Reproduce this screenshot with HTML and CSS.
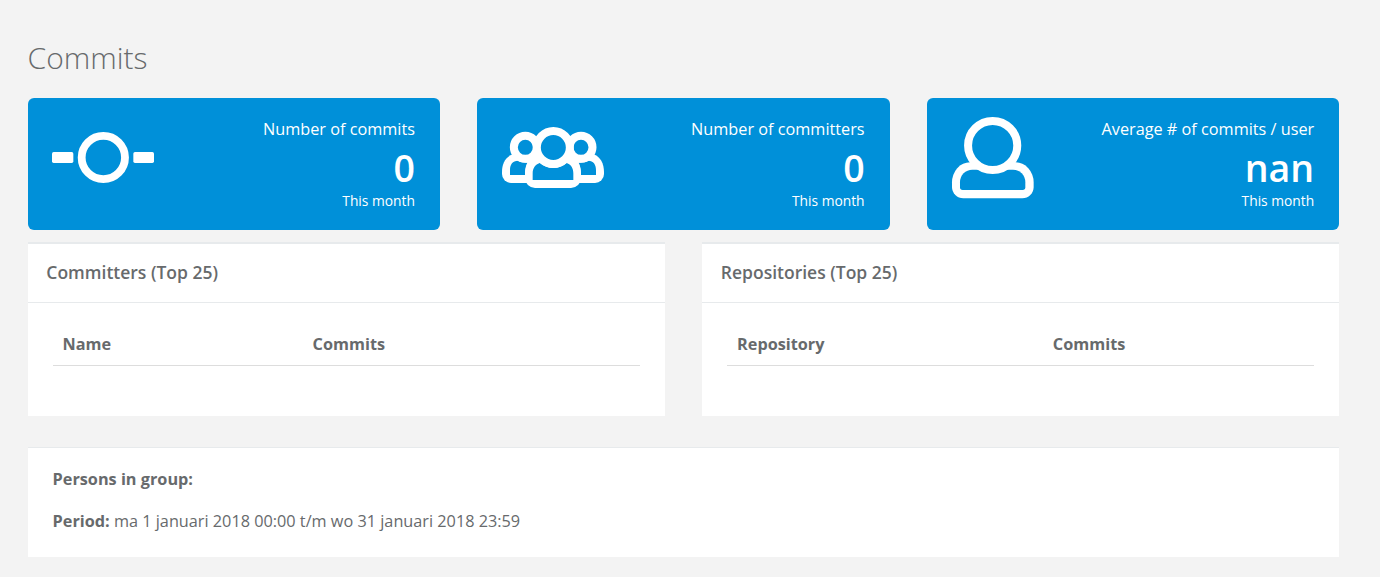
FILE: index.html
```html
<!DOCTYPE html>
<html lang="en">
<head>
<meta charset="utf-8">
<title>Commits</title>
<link rel="stylesheet" href="styles.css">
</head>
<body>
<main class="page">
  <h2 class="page-title">Commits</h2>

  <section class="widgets">
    <div class="widget">
      <svg class="icon icon-commit" viewBox="96 306 306 153">
        <rect class="solid" x="96" y="366" width="64" height="33" rx="5"/>
        <rect class="solid" x="340" y="366" width="62" height="33" rx="5"/>
        <circle class="ring" cx="250" cy="382.500" r="65"/>
      </svg>
      <div class="widget-text">
        <span class="label">Number of commits</span>
        <strong class="value">0</strong>
        <small class="note">This month</small>
      </div>
    </div>

    <div class="widget">
      <svg class="icon icon-group" viewBox="96 111 306 183">
        <path class="solid" d="M130 192C107 200 96 221 96 246V252A27 27 0 0 0 123 279H375A27 27 0 0 0 402 252V246C402 221 391 200 370 192Z"/>
        <path class="hole" d="M120 255V240C120 223 128 212 144 212Q156 219 172 218Q165 230 165 255Z"/>
        <path class="hole" d="M378 255V240C378 223 370 212 355 212Q343 219 326 218Q333 230 333 255Z"/>
        <circle class="disc" cx="166" cy="172" r="34.500"/>
        <circle class="disc" cx="333" cy="172" r="34.500"/>
        <path class="solid" d="M190 205C172 215 165 232 165 252V264A30 30 0 0 0 195 294H303A30 30 0 0 0 333 264V252C333 232 326 215 308 205Z"/>
        <path class="hole" d="M188 270V250C188 234 196 224 209 219Q250 249 290 219C303 224 310 234 310 250V270Z"/>
        <circle class="disc" cx="250" cy="172.500" r="49.500"/>
      </svg>
      <div class="widget-text">
        <span class="label">Number of committers</span>
        <strong class="value">0</strong>
        <small class="note">This month</small>
      </div>
    </div>

    <div class="widget">
      <svg class="icon icon-user" viewBox="96 81 245 244">
        <path class="solid" d="M150 217A54 60 0 0 0 96 277V291A34 34 0 0 0 130 325H307A34 34 0 0 0 341 291V277A55 60 0 0 0 286 217Z"/>
        <path class="hole" d="M120 277A37 38 0 0 1 157 239H279A37 38 0 0 1 316 277V292Q316 300 308 300H128Q120 300 120 292Z"/>
        <circle class="disc" cx="218" cy="166.500" r="73.800"/>
      </svg>
      <div class="widget-text">
        <span class="label">Average # of commits / user</span>
        <strong class="value">nan</strong>
        <small class="note">This month</small>
      </div>
    </div>
  </section>

  <section class="panels">
    <div class="panel">
      <h5 class="panel-title">Committers (Top 25)</h5>
      <div class="panel-body">
        <table class="table">
          <thead><tr><th class="col-name">Name</th><th>Commits</th></tr></thead>
        </table>
      </div>
    </div>
    <div class="panel">
      <h5 class="panel-title">Repositories (Top 25)</h5>
      <div class="panel-body">
        <table class="table">
          <thead><tr><th class="col-repository">Repository</th><th>Commits</th></tr></thead>
        </table>
      </div>
    </div>
  </section>

  <section class="summary">
    <p><b>Persons in group:</b></p>
    <p><b>Period:</b> ma 1 januari 2018 00:00 t/m wo 31 januari 2018 23:59</p>
  </section>
</main>
</body>
</html>
```
FILE: styles.css
```css
* { box-sizing: border-box; }

body {
  margin: 0;
  background: #f3f3f3;
  color: #676a6c;
  font: 16.25px/23px "Open Sans", "Noto Sans", sans-serif;
}

.page { padding: 38px 40.7px 20px 27.6px; }

.page-title {
  margin: 0 0 20px;
  font-size: 30px;
  font-weight: 300;
  line-height: 40px;
}

.widgets {
  display: grid;
  grid-template-columns: repeat(3, 1fr);
  gap: 37.2px;
}

.widget {
  display: flex;
  justify-content: space-between;
  align-items: flex-start;
  height: 132px;
  padding: 19px 25.1px 0 24.8px;
  border-radius: 6px;
  background: #0090d9;
  color: #fff;
}

.icon { display: block; flex: none; overflow: visible; }
.icon-commit { width: 102px; height: 51px; margin-top: 15px; }
.icon-group { width: 102px; height: 61px; margin-top: 10px; }
.icon-user { width: 81.67px; height: 81.33px; }

.solid { fill: #fff; }
.hole { fill: #0090d9; }
.ring { fill: none; stroke: #fff; stroke-width: 23.5; }
.disc { fill: #0090d9; stroke: #fff; stroke-width: 24; }

.widget-text {
  display: flex;
  flex-direction: column;
  align-items: flex-end;
}

.label { line-height: 24px; }
.value { font-size: 37.5px; font-weight: 600; line-height: 53px; }
.note { font-size: 13.8px; line-height: 14px; }

.panels {
  display: grid;
  grid-template-columns: 1fr 1fr;
  gap: 37.2px;
  margin-top: 12px;
}

.panel {
  height: 174px;
  border-top: 2px solid #e7eaec;
  background: #fff;
}

.panel-title {
  height: 59px;
  margin: 0;
  padding: 16px 18.75px 0;
  border-bottom: 1px solid #e7eaec;
  font-size: 17.5px;
  font-weight: 600;
  line-height: 24px;
}

.panel-body { padding: 19px 25px 0; }

.table {
  width: 100%;
  border-collapse: separate;
  border-spacing: 0;
  table-layout: fixed;
}

.table th {
  height: 44px;
  padding: 11px 10px 9px;
  border-bottom: 1px solid #ddd;
  text-align: left;
  font-weight: 700;
}

.col-name { width: 250px; }
.col-repository { width: 315.8px; }

.summary {
  height: 110px;
  margin-top: 31px;
  padding: 20px 25px 0;
  border-top: 1px solid #e7eaec;
  background: #fff;
}

.summary p { margin: 0 0 19px; }
```
